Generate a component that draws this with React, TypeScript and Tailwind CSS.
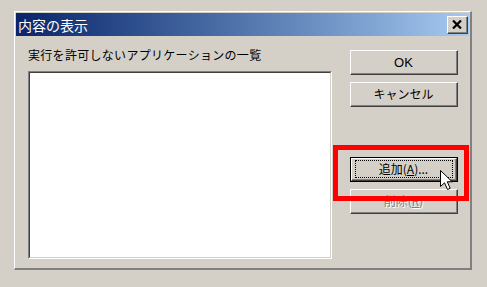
import React from "react";

function RaisedButton({
  children,
  isDefault,
  disabled,
}: {
  children: React.ReactNode;
  isDefault?: boolean;
  disabled?: boolean;
}) {
  const bevel = (
    <div className="w-full h-full border border-t-white border-l-white border-r-[#404040] border-b-[#404040]">
      <div className="relative w-full h-full border-r border-b border-[#808080] flex items-center justify-center">
        {isDefault && (
          <div className="absolute top-[1px] left-[3px] right-[2px] bottom-[1px] border border-dotted border-black" />
        )}
        <span
          className={
            disabled
              ? "text-[12px] leading-[14px] text-[#808080] [text-shadow:1px_1px_0_#ffffff]"
              : "text-[12px] leading-[14px] text-black"
          }
        >
          {children}
        </span>
      </div>
    </div>
  );

  return (
    <div className="w-[108px] h-[25px] bg-[#d4d0c8]">
      {isDefault ? <div className="w-full h-full border border-black">{bevel}</div> : bevel}
    </div>
  );
}

export default function App() {
  return (
    <div className="relative w-[487px] h-[287px] overflow-hidden bg-[#d4d0c8] pt-[11px] pl-[14px] font-['Noto_Sans_CJK_JP','Liberation_Sans',sans-serif]">
      {/* dialog window */}
      <div className="w-[458px] h-[259px] border-t border-l border-white border-r-2 border-b-2 border-r-[#808080] border-b-[#808080] p-px flex flex-col">
        {/* title bar */}
        <div className="h-[23px] shrink-0 flex items-center justify-between pl-[2px] pr-[1px] bg-gradient-to-r from-[#0a246a] to-[#a6caf0]">
          <span className="text-white text-[14px] leading-[16px]">内容の表示</span>
          <div className="w-[21px] h-[18px] bg-[#d4d0c8] border border-t-white border-l-white border-r-[#404040] border-b-[#404040]">
            <div className="w-full h-full border-r border-b border-[#808080] flex items-center justify-center">
              <svg width="10" height="9" viewBox="0 0 10 9">
                <path d="M1 0.5 L9 8.5 M9 0.5 L1 8.5" stroke="#000" strokeWidth="2.2" fill="none" />
              </svg>
            </div>
          </div>
        </div>

        {/* body */}
        <div className="flex pl-[12px] pt-[12px]">
          <div className="w-[304px] flex flex-col">
            <div className="h-[14px] text-[12px] leading-[14px] tracking-[0.3px] text-black whitespace-nowrap">
              実行を許可しないアプリケーションの一覧
            </div>
            <div className="mt-[9px] h-[188px] border border-t-[#808080] border-l-[#808080] border-r-white border-b-white">
              <div className="w-full h-full bg-white border border-t-[#404040] border-l-[#404040] border-r-[#d4d0c8] border-b-[#d4d0c8]" />
            </div>
          </div>

          <div className="ml-[18px] pt-[2px] flex flex-col">
            <RaisedButton>
              <span className="text-[13px] font-['Liberation_Sans',sans-serif]">OK</span>
            </RaisedButton>
            <div className="mt-[7px]">
              <RaisedButton>キャンセル</RaisedButton>
            </div>
            <div className="mt-[50px]">
              <RaisedButton isDefault>
                追加(<span className="underline">A</span>)...
              </RaisedButton>
            </div>
            <div className="mt-[7px]">
              <RaisedButton disabled>
                削除(<span className="underline">R</span>)
              </RaisedButton>
            </div>
          </div>
        </div>
      </div>

      {/* mouse pointer */}
      <svg className="absolute left-[440px] top-[170px]" width="14" height="21" viewBox="0 0 14 21">
        <path
          d="M0.5 0.5 L0.5 16.5 L4.5 12.8 L7.5 19.5 L10.2 18.3 L7.3 11.8 L12.2 11.8 Z"
          fill="#ffffff"
          stroke="#000000"
          strokeWidth="1"
        />
      </svg>

      {/* red highlight */}
      <div className="absolute left-[333px] top-[145px] w-[136px] h-[56px] border-[5px] border-[#ff0000]" />
    </div>
  );
}
